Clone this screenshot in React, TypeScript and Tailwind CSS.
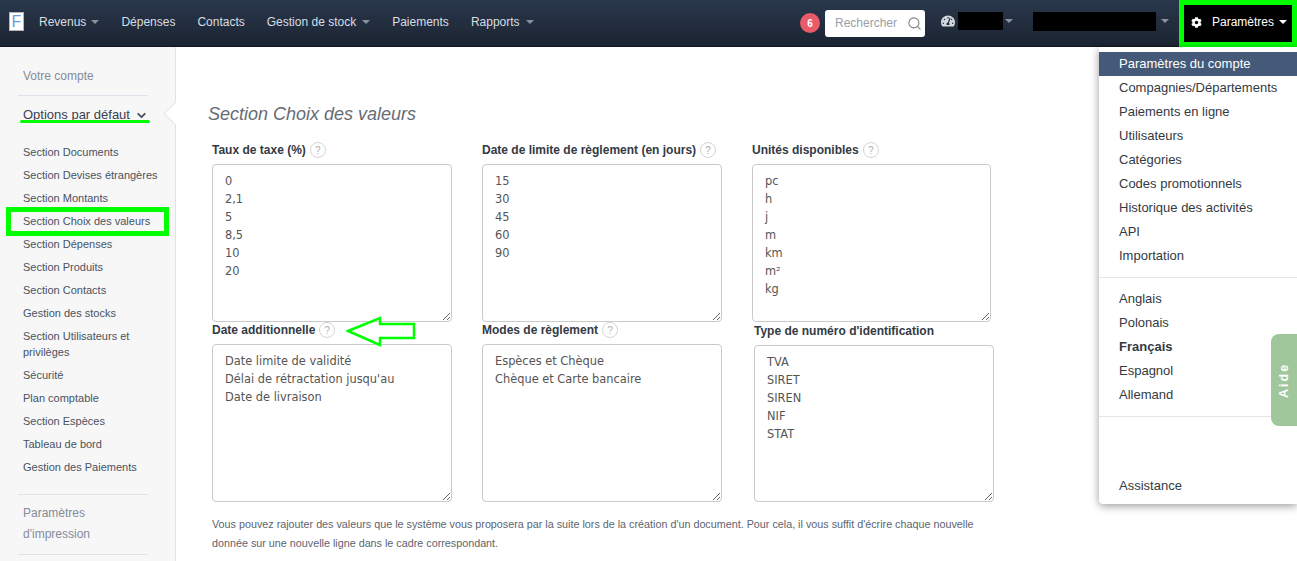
import { Search, ChevronDown } from "lucide-react";
import { FaCog, FaTachometerAlt } from "react-icons/fa";

const F = "font-['Liberation_Sans',Arial,sans-serif]";

function Caret({ className = "border-t-[#8a93a0]" }: { className?: string }) {
  return <span className={`block w-0 h-0 border-x-[4px] border-x-transparent border-t-[4px] ${className}`} />;
}

function NavItem({ label, caret, gap = "gap-[6px]" }: { label: string; caret?: boolean; gap?: string }) {
  return (
    <span className={`flex items-center text-[12px] text-[#d8dde3] ${gap}`}>
      {label}
      {caret && <Caret />}
    </span>
  );
}

function TopBar() {
  return (
    <header className="h-[47px] shrink-0 flex items-center bg-gradient-to-b from-[#2a384d] to-[#1b2431] border-b border-[#11161e]">
      <div className="w-[15px] h-[19px] ml-[9px] mb-[3px] bg-white border border-[#b5b5b5] flex items-center justify-center text-[16px] leading-none text-[#6c9bd6]">F</div>
      <nav className="flex items-center mb-[3px] ml-[15px] gap-[22px]">
        <NavItem label="Revenus" caret gap="gap-[5px]" />
        <NavItem label="Dépenses" />
        <NavItem label="Contacts" />
        <NavItem label="Gestion de stock" caret />
        <NavItem label="Paiements" />
        <NavItem label="Rapports" caret />
      </nav>
      <div className="ml-auto flex items-center h-full">
        <span className="w-5 h-5 rounded-full bg-[#e95b68] text-white text-[10px] font-bold flex items-center justify-center">6</span>
        <div className="ml-[5px] w-[100px] h-[27px] bg-white rounded-[3px] flex items-center justify-between pl-[10px] pr-[3px] text-[12px] text-[#9aa0a8]">
          Rechercher
          <Search size={15} strokeWidth={1.7} className="text-[#77808a]" />
        </div>
        <div className="flex items-center h-full pb-[4px]">
          <FaTachometerAlt size={14} className="ml-[16px] text-[#d3d8de]" />
          <span className="ml-[3px] w-[45px] h-[18px] bg-black" />
          <span className="ml-[2px] mr-[20px]"><Caret /></span>
          <span className="w-[123px] h-[19px] bg-black" />
          <span className="ml-[5px] mr-[10px]"><Caret /></span>
        </div>
        <div className="w-[118px] h-[47px] bg-black border-[5px] border-[#00ff00] flex items-center text-[12px] text-white pl-[7px] pb-[2px]">
          <FaCog size={11} className="mr-[10px]" />
          Paramètres
          <span className="ml-[5px]"><Caret className="border-t-white" /></span>
        </div>
      </div>
    </header>
  );
}

const subs = [
  "Section Documents",
  "Section Devises étrangères",
  "Section Montants",
  "Section Choix des valeurs",
  "Section Dépenses",
  "Section Produits",
  "Section Contacts",
  "Gestion des stocks",
];
const subs2 = ["Sécurité", "Plan comptable", "Section Espèces", "Tableau de bord", "Gestion des Paiements"];

function SubLink({ label }: { label: string }) {
  return <div className="h-[23px] flex items-center whitespace-nowrap text-[11px] text-[#4a5260]">{label}</div>;
}

function Sidebar() {
  return (
    <aside className="relative w-[176px] shrink-0 bg-[#f7f7f8] border-r border-[#dfe3e9] pl-[18px] pr-[27px] overflow-hidden">
      <div className="h-[49px] pt-[21px] pl-[5px] text-[12px] leading-[16px] text-[#858b98] border-b border-[#dde3ea]">Votre compte</div>
      <div className="pl-[5px] pt-[11px] flex items-center justify-between whitespace-nowrap text-[13px] leading-[16px] text-[#39414f]">
        Options par défaut
        <ChevronDown size={13} strokeWidth={3.5} className="text-[#4a5260]" />
      </div>
      <div className="pl-[5px] mt-[18px]">
        {subs.map((s) => <SubLink key={s} label={s} />)}
        <div className="py-[3px] text-[11px] leading-[16px] text-[#4a5260] mb-[1px]">Section Utilisateurs et privilèges</div>
        {subs2.map((s) => <SubLink key={s} label={s} />)}
      </div>
      <div className="mt-[15px] border-t border-[#dde3ea] pl-[5px] pt-[8px] pb-[9px] text-[12px] leading-[21px] text-[#858b98] border-b">
        Paramètres<br />d'impression
      </div>
    </aside>
  );
}

function Help() {
  return (
    <span className="w-4 h-4 rounded-full border border-[#d5d5d5] text-[10px] text-[#b0b0b0] flex items-center justify-center font-normal">?</span>
  );
}

function Field({ label, help, value, className = "", boxClass = "w-[240px] h-[158px]" }: { label: string; help?: boolean; value: string; className?: string; boxClass?: string }) {
  return (
    <div className={`w-[240px] ${className}`}>
      <div className="h-[22px] flex items-center gap-[4px] text-[12px] font-bold text-[#333a44]">
        {label}
        {help && <Help />}
      </div>
      <textarea
        readOnly
        defaultValue={value}
        className={`block border border-[#cacaca] rounded-[4px] bg-white px-3 py-[7px] text-[11.4px] leading-[18px] text-[#555] outline-none font-['DejaVu_Sans',sans-serif] mt-[3px] ${boxClass}`}
      />
    </div>
  );
}

function Main() {
  return (
    <main className="flex-1 min-w-0 pl-[32px] pt-[56px] relative">
      <span className="absolute left-[-9px] top-[58px] w-[17px] h-[17px] rotate-45 bg-white border-l border-b border-[#dfe3e9]" />
      <h2 className="text-[18px] leading-[22px] italic text-[#666b73]">Section Choix des valeurs</h2>
      <div className="pl-[4px] mt-[14px] grid grid-cols-[270px_270px_270px]">
        <Field label="Taux de taxe (%)" help value={"0\n2,1\n5\n8,5\n10\n20"} />
        <Field label="Date de limite de règlement (en jours)" help value={"15\n30\n45\n60\n90"} />
        <Field label="Unités disponibles" help value={"pc\nh\nj\nm\nkm\nm²\nkg"} boxClass="w-[239px] h-[158px]" />
        <Field label="Date additionnelle" help value={"Date limite de validité\nDélai de rétractation jusqu'au\nDate de livraison"} className="-mt-[3px]" />
        <Field label="Modes de règlement" help value={"Espèces et Chèque\nChèque et Carte bancaire"} className="-mt-[3px]" />
        <Field label="Type de numéro d'identification" value={"TVA\nSIRET\nSIREN\nNIF\nSTAT"} className="ml-[2px] -mt-[2px]" boxClass="w-[240px] h-[157px]" />
      </div>
      <p className="pl-[4px] mt-[13px] w-[780px] text-[10.77px] leading-[19px] text-[#5d6470]">
        Vous pouvez rajouter des valeurs que le système vous proposera par la suite lors de la création d'un document. Pour cela, il vous suffit d'écrire chaque nouvelle donnée sur une nouvelle ligne dans le cadre correspondant.
      </p>
    </main>
  );
}

function DropItem({ label, bold, active }: { label: string; bold?: boolean; active?: boolean }) {
  return (
    <div className={`h-[24px] pl-[20px] flex items-center text-[13px] ${active ? "bg-[#445a78] text-white" : "text-[#333a44]"} ${bold ? "font-bold" : ""}`}>
      {label}
    </div>
  );
}

function Dropdown() {
  return (
    <div className="absolute left-[1099px] top-[47px] w-[198px] h-[457px] bg-white rounded-bl-[4px] shadow-[0_2px_8px_rgba(0,0,0,0.4)] pt-[5px]">
      {["Paramètres du compte", "Compagnies/Départements", "Paiements en ligne", "Utilisateurs", "Catégories", "Codes promotionnels", "Historique des activités", "API", "Importation"].map((l, i) => (
        <DropItem key={l} label={l} active={i === 0} />
      ))}
      <div className="my-[9px] border-t border-[#e5e5e5]" />
      {["Anglais", "Polonais"].map((l) => <DropItem key={l} label={l} />)}
      <DropItem label="Français" bold />
      {["Espagnol", "Allemand"].map((l) => <DropItem key={l} label={l} />)}
      <div className="mt-[9px] mb-[57px] border-t border-[#e5e5e5]" />
      <DropItem label="Assistance" />
    </div>
  );
}

export default function App() {
  return (
    <div className={`relative w-[1297px] h-[561px] overflow-hidden bg-white flex flex-col ${F}`}>
      <TopBar />
      <div className="flex flex-1 min-h-0">
        <Sidebar />
        <Main />
      </div>
      <Dropdown />
      <div className="absolute left-[1271px] top-[334px] w-[26px] h-[92px] rounded-l-[8px] bg-[#9fc79b] flex items-center justify-center">
        <span className="-rotate-90 ml-[2px] text-white text-[12.5px] font-bold tracking-[2px]">Aide</span>
      </div>
      {/* annotations */}
      <span className="absolute left-[20px] top-[120px] w-[130px] h-[3px] rounded-full bg-[#00ff00]" />
      <span className="absolute left-[6px] top-[207px] w-[163px] h-[29px] border-[5px] border-[#00ff00]" />
      <svg className="absolute left-[346px] top-[316px]" width="70" height="32" viewBox="0 0 70 32" fill="none">
        <path d="M2 15 L34 2 L34 8 L68 8 L68 22 L34 22 L34 29 Z" stroke="#00ff00" strokeWidth="2.5" />
      </svg>
    </div>
  );
}
